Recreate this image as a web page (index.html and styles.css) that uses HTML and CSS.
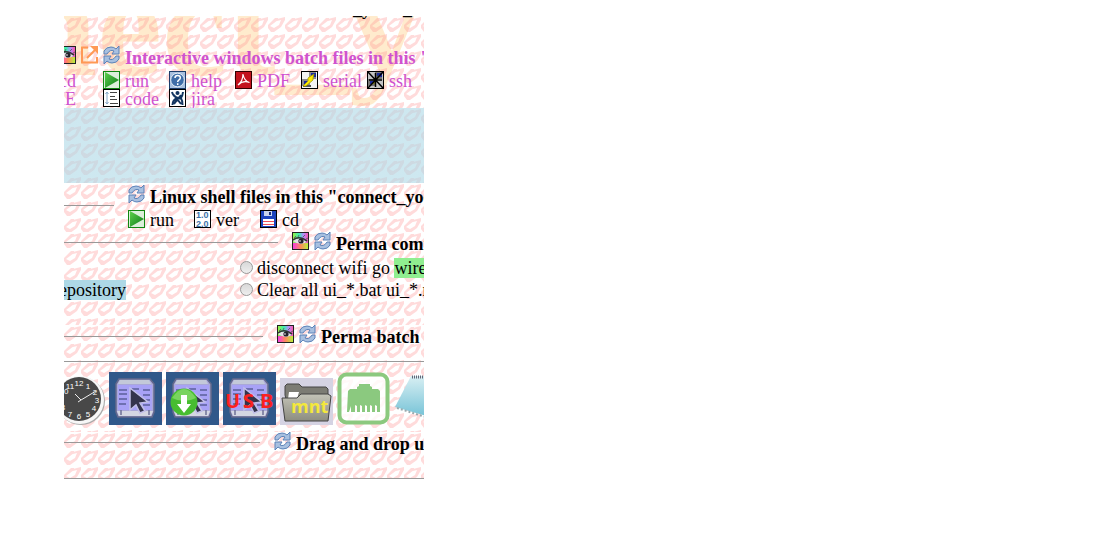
FILE: index.html
```
<!DOCTYPE html>
<html lang="en">
<head>
<meta charset="utf-8">
<title>connect_yocto</title>
<link rel="stylesheet" href="styles.css">
</head>
<body>
<svg class="defs" aria-hidden="true">
  <defs>
    <linearGradient id="rainbow" x1="0" y1="0" x2="1" y2="0"><stop offset="0" stop-color="#a3f23c"/><stop offset=".4" stop-color="#39f0b0"/><stop offset=".7" stop-color="#b78bff"/><stop offset="1" stop-color="#ff4fa0"/></linearGradient>
    <linearGradient id="warm" x1="0" y1="0" x2="1" y2="0"><stop offset="0" stop-color="#f63ce0"/><stop offset=".5" stop-color="#ff8a5c"/><stop offset="1" stop-color="#b8f03c"/></linearGradient>
    <linearGradient id="green" x1="0" y1="0" x2="1" y2="1"><stop offset="0" stop-color="#5fd04c"/><stop offset="1" stop-color="#0c7a18"/></linearGradient>
    <linearGradient id="folder" x1="0" y1="0" x2="0" y2="1"><stop offset="0" stop-color="#c4c4b8"/><stop offset="1" stop-color="#8c8c80"/></linearGradient>
    <linearGradient id="aqua" x1="0" y1="0" x2="0" y2="1"><stop offset="0" stop-color="#d8eff3"/><stop offset="1" stop-color="#69bdd3"/></linearGradient>
  </defs>
  <symbol id="eye" viewBox="0 0 17 18"><rect x=".5" y=".5" width="16" height="17" fill="url(#rainbow)" stroke="#222"/><path d="M1 11h15v6H1z" fill="url(#warm)"/><path d="M1 9q5-5 14 0q-5 6-14 0z" fill="#e6e0ea"/><circle cx="9" cy="9" r="2.600" fill="#24202c"/><circle cx="8" cy="9" r=".8" fill="#fff"/><path d="M1 8Q7 3 15 9" fill="none" stroke="#333" stroke-width="1.600"/><path d="M2 6l2-2M6 5l1-2M11 5l2-2M14 7l2-1" stroke="#555" stroke-width=".8"/></symbol>
  <symbol id="external" viewBox="0 0 17 18"><path d="M7 1.500H1v15h15V11M6 12l8-8" fill="none" stroke="#ff9955" stroke-width="2"/><path d="M9 0h8v8l-3-3-2-2z" fill="#ff9955"/></symbol>
  <symbol id="refresh" viewBox="0 0 17 18"><path d="M1 8V5Q3 1 8 1q3 0 5 2l3-3v8H9l2-3Q7 3 4 8z" fill="#a8c0e0" stroke="#5c82b8" stroke-width="1"/><path d="M16 10v3q-2 4-7 4-3 0-5-2l-3 3v-8h7l-2 3q4 2 7-3z" fill="#a8c0e0" stroke="#5c82b8" stroke-width="1"/></symbol>
  <symbol id="play" viewBox="0 0 17 18"><rect x=".5" y=".5" width="16" height="17" fill="#dcefda" stroke="#118711"/><path d="M2 1l14 8-14 8z" fill="url(#green)"/></symbol>
  <symbol id="code" viewBox="0 0 17 18"><rect x=".5" y=".5" width="16" height="17" fill="#fff" stroke="#000"/><path d="M4 3v12M2.500 5L4 3l1.500 2M2.500 13L4 15l1.500-2" stroke="#86a8c8" fill="none"/><path d="M7 3.500h7M7 7.500h5M7 10.500h7M7 14.500h8" stroke="#444" stroke-width="1"/></symbol>
  <symbol id="help" viewBox="0 0 17 18"><rect x=".5" y=".5" width="16" height="17" fill="#a9c0df" stroke="#1d3c6b"/><circle cx="8.500" cy="9" r="6.800" fill="#3f6da8" stroke="#e4ecf6"/><path d="M6 7q0-2.500 2.700-2.500T11.300 7Q11.300 8.300 9.500 9.300 8.700 9.800 8.700 11M8.700 12.300v1.700" fill="none" stroke="#fff" stroke-width="1.500"/></symbol>
  <symbol id="jira" viewBox="0 0 17 18"><rect x=".5" y=".5" width="16" height="17" fill="#fff" stroke="#000"/><path d="M3 3q1 4 5.500 6T14 3M3.500 16q0-5 5-7t5 7M5 6l7 9M12 6l-7 9" fill="none" stroke="#143560" stroke-width="2"/><circle cx="8.500" cy="4" r="2" fill="#143560"/></symbol>
  <symbol id="pdf" viewBox="0 0 17 18"><rect x=".5" y=".5" width="16" height="17" fill="#c3121d" stroke="#300"/><path d="M3 14Q8 10 8 3q1 7 6.500 8.500Q8 9 3 14z" fill="none" stroke="#fff" stroke-width="1.200"/></symbol>
  <symbol id="serial" viewBox="0 0 17 18"><rect x=".5" y=".5" width="16" height="17" fill="#f4f4f4" stroke="#000"/><path d="M8 1h7v7H8zM1 8h8v7H1z" fill="#8d8d8d"/><path d="M10 2h5v4h-5zM3 10h4v3H3z" fill="#1b2a9c"/><path d="M2 14h8v2H2z" fill="#555"/><path d="M13 3L7 7v3l-5 5h3l7-6V7z" fill="#ffec00" stroke="#a59a00" stroke-width=".8"/></symbol>
  <symbol id="ssh" viewBox="0 0 17 18"><rect x=".5" y=".5" width="16" height="17" fill="#c4c4c4" stroke="#000"/><path d="M8 1h7v7H8zM1 8h8v7H1z" fill="#777"/><path d="M10 2h5v4h-5zM3 10h4v3H3z" fill="#1b2a9c"/><path d="M12 5l-6 8" stroke="#8a8418" stroke-width="2"/><path d="M1 1l15 16M16 1L1 17M8.500 2v14M2 9h13" stroke="#000" stroke-width="1.500"/></symbol>
  <symbol id="ver" viewBox="0 0 17 18"><rect x=".5" y=".5" width="16" height="17" fill="#fff" stroke="#000"/><text x="2" y="8" class="ver-text">1.0</text><text x="2" y="17" class="ver-text">2.0</text></symbol>
  <symbol id="floppy" viewBox="0 0 17 18"><rect x=".5" y=".5" width="16" height="17" fill="#1c43bd" stroke="#000"/><path d="M4 1h8v5H4z" fill="#c9d4ee"/><path d="M9 2h2v3H9z" fill="#1b2f7a"/><path d="M3 9h11v7H3z" fill="#fff"/><path d="M3 11.500h11M3 14.500h11" stroke="#f0505a" stroke-width="1"/></symbol>
  <symbol id="screen" viewBox="0 0 53 53"><rect width="53" height="53" fill="#30588a"/><path d="M10 7h31l4 5v28l-2 5H9l-2-5V12z" fill="#aaa8d8" stroke="#64698c" stroke-width="1.500"/><path d="M11 8h29l2 4H9z" fill="#c3c9d9"/><path d="M8 39h36l-2 5H10z" fill="#d4d7e2"/><path d="M9 13h34v25H9z" fill="#a8a2f6"/><path d="M10 18h8M10 22h8M10 27h8M10 32h7M23 17h7M34 18h7M34 23h7M34 28h7M34 33h7" stroke="#5b609b" stroke-width="1.500"/><path d="M12 38v5M40 38v5" stroke="#6d7196" stroke-width="1.500"/></symbol>
  <symbol id="pointer" viewBox="0 0 53 53"><path d="M21 16l18 14-8 1 5 8-5 2-4-8-6 5z" fill="#34344c" stroke="#c1bfe8" stroke-width="1.500"/></symbol>
</svg>

<main class="panel">
  <div class="watermark" aria-hidden="true">nect_y</div>

  <section class="block windows">
    <div class="previous">connect_yocto_</div>
    <h2 class="title">
      <svg class="icon"><use href="#eye"/></svg>
      <svg class="icon"><use href="#external"/></svg>
      <svg class="icon"><use href="#refresh"/></svg>
      <span>Interactive windows batch files in this "connect_yocto"</span>
    </h2>
    <div class="links">
      <a href="#cd"><svg class="icon"><use href="#floppy"/></svg>cd</a>
      <a href="#run"><svg class="icon"><use href="#play"/></svg>run</a>
      <a href="#help"><svg class="icon"><use href="#help"/></svg>help</a>
      <a href="#pdf"><svg class="icon"><use href="#pdf"/></svg>PDF</a>
      <a href="#serial"><svg class="icon"><use href="#serial"/></svg>serial</a>
      <a href="#ssh"><svg class="icon"><use href="#ssh"/></svg>ssh</a>
      <a href="#ie"><svg class="icon"><use href="#help"/></svg>IE</a>
      <a href="#code"><svg class="icon"><use href="#code"/></svg>code</a>
      <a href="#jira"><svg class="icon"><use href="#jira"/></svg>jira</a>
    </div>
  </section>

  <section class="block band"></section>

  <section class="block linux">
    <div class="heading">
      <hr class="rule rule-linux">
      <h2 class="title"><svg class="icon"><use href="#refresh"/></svg><span>Linux shell files in this "connect_yocto"</span></h2>
    </div>
    <div class="links links-linux">
      <a href="#run2"><svg class="icon"><use href="#play"/></svg>run</a>
      <a href="#ver2"><svg class="icon"><use href="#ver"/></svg>ver</a>
      <a href="#cd2"><svg class="icon"><use href="#floppy"/></svg>cd</a>
    </div>
  </section>

  <section class="block commands">
    <div class="heading">
      <hr class="rule rule-commands">
      <h2 class="title"><svg class="icon"><use href="#eye"/></svg><svg class="icon"><use href="#refresh"/></svg><span>Perma commands</span></h2>
    </div>
    <div class="options">
      <span class="cell"></span>
      <label class="choice"><input type="radio" name="command"><span>disconnect wifi go <mark class="green">wired</mark></span></label>
      <span class="cell"><mark class="blue">repository</mark></span>
      <label class="choice"><input type="radio" name="command"><span>Clear all ui_*.bat ui_*.reg</span></label>
    </div>
  </section>

  <section class="block batch">
    <div class="heading">
      <hr class="rule rule-batch">
      <h2 class="title"><svg class="icon"><use href="#eye"/></svg><svg class="icon"><use href="#refresh"/></svg><span>Perma batch (files)</span></h2>
    </div>
  </section>

  <section class="block tools">
    <hr class="line">
    <div class="shortcuts">
      <a href="#clock" aria-label="Clock"><svg class="tile" viewBox="0 0 53 53"><circle cx="29" cy="29" r="24" fill="#aaa"/><circle cx="28" cy="28" r="24" fill="#f7f7f7"/><circle cx="27" cy="27" r="22" fill="#484848"/><g class="clock-text"><text x="27" y="14">12</text><text x="36" y="17">1</text><text x="43" y="23">2</text><text x="45" y="31">3</text><text x="42" y="39">4</text><text x="36" y="45">5</text><text x="27" y="47">6</text><text x="18" y="45">7</text><text x="11" y="38">8</text><text x="9" y="30">9</text><text x="12" y="22">10</text><text x="18" y="17">11</text></g><path d="M23 22l6 6 15-9M29 28l-3 2" fill="none" stroke="#eee" stroke-width="1"/></svg></a>
      <a href="#screen" aria-label="Screen"><svg class="tile"><use href="#screen"/><use href="#pointer"/></svg></a>
      <a href="#download" aria-label="Download"><svg class="tile" viewBox="0 0 53 53"><use href="#screen"/><use href="#pointer"/><circle cx="18" cy="30" r="13.500" fill="#47bd30"/><path d="M6 26q12-18 24 0q-12 6-24 0z" fill="#79d45e"/><path d="M15 23h6v9h4l-7 9-7-9h4z" fill="#fff"/></svg></a>
      <a href="#usb" aria-label="USB"><svg class="tile" viewBox="0 0 53 53"><use href="#screen"/><use href="#pointer"/><text x="2" y="36" class="usb-text">U</text><text x="20" y="36" class="usb-text">S</text><text x="37" y="36" class="usb-text">B</text></svg></a>
      <a href="#mnt" aria-label="mnt"><svg class="tile tile-folder" viewBox="0 0 53 47"><rect width="53" height="47" fill="#d5d3e3"/><path d="M5 17V8l2-2h12l3 3h24l2 2v10H6z" fill="#7c7c74" stroke="#444" stroke-width="1"/><path d="M9 14h10l-2 7H8z" fill="#fff"/><path d="M2 20h15l4-4h27l3 2-3 25H5z" fill="url(#folder)" stroke="#444" stroke-width="1"/><text x="11" y="35" class="mnt-text">mnt</text></svg></a>
      <a href="#ethernet" aria-label="Ethernet"><svg class="tile" viewBox="0 0 53 53"><rect x="2.500" y="2.500" width="48" height="48" rx="7" fill="#fff" fill-opacity=".8" stroke="#8bc97f" stroke-width="4"/><path d="M11 19l2-2h7v-2l2-1v-2h11v2l2 1v2h6l2 2v21h-3v-6l-2-1v7h-3v-6l-2-1v7h-3v-6l-2-1v7h-3v-6l-2-1v7h-3v-6l-2-1v7h-4v-6l-2 6h-2z" fill="#8bc97f"/></svg></a>
      <a href="#notes" aria-label="Notes"><svg class="tile" viewBox="0 0 53 53"><path d="M17 4h36v46L1 35z" fill="url(#aqua)"/><path d="M18 5h35" stroke="#667" stroke-width="3" stroke-dasharray="1 1"/><path d="M3 36l35 11" stroke="#99aaae" stroke-width="2" stroke-dasharray="2 2"/></svg></a>
    </div>
  </section>

  <section class="block drop">
    <div class="heading">
      <hr class="rule rule-drop">
      <h2 class="title"><svg class="icon"><use href="#refresh"/></svg><span>Drag and drop urls</span></h2>
    </div>
    <hr class="line">
  </section>
</main>
</body>
</html>
```
FILE: styles.css
```
body {
  --pattern: url("data:image/svg+xml,%3Csvg xmlns='http://www.w3.org/2000/svg' width='17' height='17'%3E%3Cpath d='M0 9L7 2L10 2L10 4L2 10L0 12zM9 3L17 1L17 4L13 11L6 16L3 16L0 12L2 10L6 12L11 9L13 4L9 5z' fill='%23ff9090' fill-opacity='.33'/%3E%3C/svg%3E");
  margin: 0;
  background: #fff;
  color: #000;
  font-family: "Liberation Serif", "Times New Roman", serif;
  font-size: 18px;
  line-height: 20px;
}
.defs { position: absolute; width: 0; height: 0; }
.panel {
  position: relative;
  margin: 16px 0 0 64px;
  max-width: 360px;
  overflow: hidden;
  white-space: nowrap;
}
.watermark {
  position: absolute;
  z-index: -1;
  left: -48px;
  top: -70px;
  color: #ffebcd;
  font-size: 146px;
  font-weight: bold;
  line-height: 160px;
}
.block {
  overflow: hidden;
  background-image: var(--pattern);
}
.title {
  display: flex;
  gap: 5px;
  margin: 0;
  font-size: 18px;
  line-height: 24px;
}
.icon { flex: none; width: 17px; height: 18px; }
.previous {
  height: 3px;
  margin-left: 230px;
  color: #000;
  font-weight: bold;
  display: flex;
  align-items: flex-end;
}
.windows { color: #cf52cf; padding-bottom: 1px; }
.windows .title { margin: 27px 0 0 -5px; }
.links {
  display: grid;
  grid-template-columns: repeat(6, 66px);
  margin-left: -27px;
}
.links a {
  display: flex;
  gap: 5px;
  height: 18px;
  color: inherit;
  text-decoration: none;
}
.windows .links { padding-top: 1px; }
.band {
  height: 75px;
  background-color: #fff;
  background-image: linear-gradient(rgba(173, 216, 230, .6), rgba(173, 216, 230, .6)), var(--pattern);
}
.linux { padding-top: 2px; }
.heading { display: flex; gap: 14px; }
.rule {
  flex: none;
  box-sizing: border-box;
  height: 1px;
  margin: 20px 0 0;
  border: 0;
  background: #999;
}
.rule-linux { width: 50px; }
.rule-commands { width: 214px; margin-top: 10px; }
.rule-batch { width: 199px; margin-top: 11px; }
.rule-drop { width: 196px; margin-top: 10px; }
.links-linux { margin: 1px 0 4px 64px; }
.options {
  display: grid;
  grid-template-columns: 176px auto;
  row-gap: 2px;
  padding: 2px 0 25px;
}
.cell { margin-left: -11px; }
.choice { display: flex; gap: 4px; }
.choice input {
  appearance: none;
  box-sizing: border-box;
  width: 13px;
  height: 13px;
  margin: 3px 0 0;
  border: 1px solid #999;
  border-radius: 50%;
  background: linear-gradient(#d8d8d8, #eee);
}
mark { display: inline-block; color: inherit; }
.green { background: #90ee90; }
.blue { background: #add8e6; }
.batch { padding-bottom: 12px; }
.line { height: 1px; margin: 0; border: 0; background: #999; }
.shortcuts {
  display: flex;
  align-items: flex-end;
  gap: 4px;
  margin-left: -12px;
  padding: 10px 0 7px;
}
.shortcuts a { display: flex; }
.tile { width: 53px; height: 53px; }
.tile-folder { height: 47px; }
.drop .title { margin-bottom: 22px; }
.ver-text { font: bold 9px "Liberation Sans", sans-serif; fill: #3e72aa; }
.clock-text { font: 8px "Liberation Sans", sans-serif; fill: #fff; text-anchor: middle; }
.usb-text { font: bold 20px "Open Sans", sans-serif; fill: #fb2020; }
.mnt-text { font: bold 18px "Open Sans", sans-serif; fill: #f3e73c; }
```
